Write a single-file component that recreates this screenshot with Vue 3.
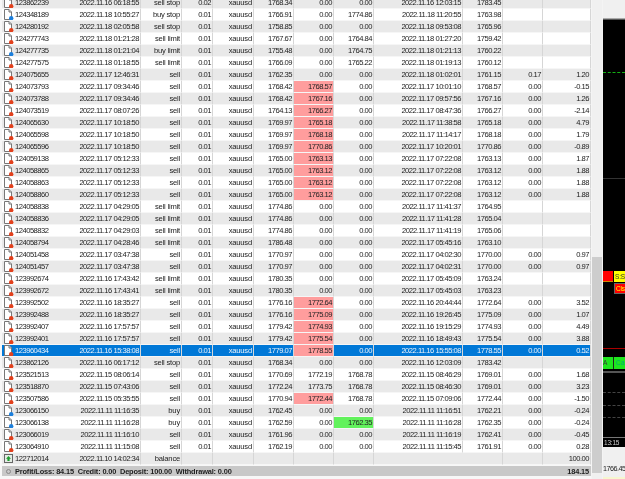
<template>
  <div class="terminal">
    <div class="history">
      <div class="rows">
        <div
          v-for="(row, i) in rows"
          :key="row.ticket"
          class="row"
          :class="{ odd: i % 2 === 0, selected: row.ticket === selectedTicket }"
        >
          <div class="cell ticket">
            <svg class="doc" width="11" height="12" viewBox="0 0 11 12">
              <template v-if="row.kind === 'balance'">
                <rect x="1.5" y="1.5" width="8" height="8" fill="#e4ece4" stroke="#666" />
                <path d="M5.5 3L8 5.8H6.6V8H4.4V5.8H3Z" fill="#1f9d2f" />
              </template>
              <template v-else>
                <path d="M1.5 .5H6L8.5 3V10.5H1.5Z" fill="#fff" stroke="#777" />
                <path d="M6 .5V3H8.5" fill="#ddd" stroke="#777" />
                <circle cx="8.2" cy="9.2" r="2.2" :fill="row.kind === 'buy' ? '#1c7fdc' : '#e2401c'" />
              </template>
            </svg>
            <span>{{ row.ticket }}</span>
          </div>
          <div class="cell">{{ row.open }}</div>
          <div class="cell word">{{ row.type }}</div>
          <div class="cell">{{ row.size }}</div>
          <div class="cell word">{{ row.kind === 'balance' ? '' : 'xauusd' }}</div>
          <div class="cell">{{ row.price }}</div>
          <div class="cell" :class="{ hit: row.slHit }">{{ row.sl }}</div>
          <div class="cell" :class="{ take: row.tpHit }">{{ row.tp }}</div>
          <div class="cell" :class="{ wide: row.kind === 'balance', word: row.kind === 'balance' }">{{ row.close }}</div>
          <div v-if="row.kind !== 'balance'" class="cell">{{ row.closePrice }}</div>
          <div class="cell">{{ row.swap }}</div>
          <div class="cell">{{ row.profit }}</div>
        </div>
      </div>
      <div class="summary">
        <span class="dot"></span>
        <span>Profit/Loss: 84.15&nbsp; Credit: 0.00&nbsp; Deposit: 100.00&nbsp; Withdrawal: 0.00</span>
        <span class="total">184.15</span>
      </div>
    </div>

    <div class="scrollbar">
      <div class="thumb"></div>
    </div>

    <div class="chart-side">
      <div class="chart-top"></div>
      <div class="chart">
        <div class="line-green"></div>
        <div class="line-grey"></div>
        <div class="btn-red"></div>
        <div class="btn-yellow">S:S</div>
        <div class="btn-close">Cls</div>
        <div class="line-red"></div>
        <div class="band"><span>A</span><span class="band-right">C a</span></div>
        <div class="line-bar"></div>
        <div class="dash d1"></div>
        <div class="dash d2"></div>
        <div class="dash d3"></div>
        <div class="time-label">13:15</div>
      </div>
      <div class="price-scale">1766.45</div>
      <div class="status-strip"></div>
    </div>
  </div>
</template>

<script setup>
const selectedTicket = '123960434'

const raw = [
  '123862239|2022.11.16 06:18:55|sell stop|0.02|1768.34|0.00|0.00|2022.11.16 12:03:15|1783.45||',
  '124348189|2022.11.18 10:55:27|buy stop|0.01|1766.91|0.00|1774.86|2022.11.18 11:20:55|1763.98||',
  '124280192|2022.11.18 02:05:58|sell stop|0.01|1758.85|0.00|0.00|2022.11.18 09:53:08|1765.96||',
  '124277743|2022.11.18 01:21:28|sell limit|0.01|1767.67|0.00|1764.84|2022.11.18 01:27:20|1759.42||',
  '124277735|2022.11.18 01:21:04|buy limit|0.01|1755.48|0.00|1764.75|2022.11.18 01:21:13|1760.22||',
  '124277575|2022.11.18 01:18:55|sell limit|0.01|1766.09|0.00|1765.22|2022.11.18 01:19:13|1760.12||',
  '124075655|2022.11.17 12:46:31|sell|0.01|1762.35|0.00|0.00|2022.11.18 01:02:01|1761.15|0.17|1.20',
  '124073793|2022.11.17 09:34:46|sell|0.01|1768.42|1768.57|0.00|2022.11.17 10:01:10|1768.57|0.00|-0.15',
  '124073788|2022.11.17 09:34:46|sell|0.01|1768.42|1767.16|0.00|2022.11.17 09:57:56|1767.16|0.00|1.26',
  '124073519|2022.11.17 08:07:26|sell|0.01|1764.13|1766.27|0.00|2022.11.17 08:47:36|1766.27|0.00|-2.14',
  '124065630|2022.11.17 10:18:50|sell|0.01|1769.97|1765.18|0.00|2022.11.17 11:38:58|1765.18|0.00|4.79',
  '124065598|2022.11.17 10:18:50|sell|0.01|1769.97|1768.18|0.00|2022.11.17 11:14:17|1768.18|0.00|1.79',
  '124065596|2022.11.17 10:18:50|sell|0.01|1769.97|1770.86|0.00|2022.11.17 10:20:01|1770.86|0.00|-0.89',
  '124059138|2022.11.17 05:12:33|sell|0.01|1765.00|1763.13|0.00|2022.11.17 07:22:08|1763.13|0.00|1.87',
  '124058865|2022.11.17 05:12:33|sell|0.01|1765.00|1763.12|0.00|2022.11.17 07:22:08|1763.12|0.00|1.88',
  '124058863|2022.11.17 05:12:33|sell|0.01|1765.00|1763.12|0.00|2022.11.17 07:22:08|1763.12|0.00|1.88',
  '124058860|2022.11.17 05:12:33|sell|0.01|1765.00|1763.12|0.00|2022.11.17 07:22:08|1763.12|0.00|1.88',
  '124058838|2022.11.17 04:29:05|sell limit|0.01|1774.86|0.00|0.00|2022.11.17 11:41:37|1764.95||',
  '124058836|2022.11.17 04:29:05|sell limit|0.01|1774.86|0.00|0.00|2022.11.17 11:41:28|1765.04||',
  '124058832|2022.11.17 04:29:03|sell limit|0.01|1774.86|0.00|0.00|2022.11.17 11:41:19|1765.06||',
  '124058794|2022.11.17 04:28:46|sell limit|0.01|1786.48|0.00|0.00|2022.11.17 05:45:16|1763.10||',
  '124051458|2022.11.17 03:47:38|sell|0.01|1770.97|0.00|0.00|2022.11.17 04:02:30|1770.00|0.00|0.97',
  '124051457|2022.11.17 03:47:38|sell|0.01|1770.97|0.00|0.00|2022.11.17 04:02:31|1770.00|0.00|0.97',
  '123992674|2022.11.16 17:43:42|sell limit|0.01|1780.35|0.00|0.00|2022.11.17 05:45:09|1763.24||',
  '123992672|2022.11.16 17:43:41|sell limit|0.01|1780.35|0.00|0.00|2022.11.17 05:45:03|1763.23||',
  '123992502|2022.11.16 18:35:27|sell|0.01|1776.16|1772.64|0.00|2022.11.16 20:44:44|1772.64|0.00|3.52',
  '123992488|2022.11.16 18:35:27|sell|0.01|1776.16|1775.09|0.00|2022.11.16 19:26:45|1775.09|0.00|1.07',
  '123992407|2022.11.16 17:57:57|sell|0.01|1779.42|1774.93|0.00|2022.11.16 19:15:29|1774.93|0.00|4.49',
  '123992401|2022.11.16 17:57:57|sell|0.01|1779.42|1775.54|0.00|2022.11.16 18:49:43|1775.54|0.00|3.88',
  '123960434|2022.11.16 15:38:08|sell|0.01|1779.07|1778.55|0.00|2022.11.16 15:55:08|1778.55|0.00|0.52',
  '123862126|2022.11.16 06:17:12|sell stop|0.01|1768.34|0.00|0.00|2022.11.16 12:03:09|1783.42||',
  '123521513|2022.11.15 08:06:14|sell|0.01|1770.69|1772.19|1768.78|2022.11.15 08:46:29|1769.01|0.00|1.68',
  '123518870|2022.11.15 07:43:06|sell|0.01|1772.24|1773.75|1768.78|2022.11.15 08:46:30|1769.01|0.00|3.23',
  '123507586|2022.11.15 05:35:55|sell|0.01|1770.94|1772.44|1768.78|2022.11.15 07:09:06|1772.44|0.00|-1.50',
  '123066150|2022.11.11 11:16:35|buy|0.01|1762.45|0.00|0.00|2022.11.11 11:16:51|1762.21|0.00|-0.24',
  '123066138|2022.11.11 11:16:28|buy|0.01|1762.59|0.00|1762.35|2022.11.11 11:16:28|1762.35|0.00|-0.24',
  '123066019|2022.11.11 11:16:10|sell|0.01|1761.96|0.00|0.00|2022.11.11 11:16:19|1762.41|0.00|-0.45',
  '123064910|2022.11.11 11:15:08|sell|0.01|1762.19|0.00|0.00|2022.11.11 11:15:45|1761.91|0.00|0.28',
  '122712014|2022.11.10 14:02:34|balance||||||Initial balance||100.00'
]

// stop loss is red when the trade closed on it, tp green likewise
const rows = raw.map((line) => {
  const [ticket, open, type, size, price, sl, tp, close, closePrice, swap, profit] = line.split('|')
  const kind = type === 'balance' ? 'balance' : type.startsWith('buy') ? 'buy' : 'sell'
  return {
    ticket, open, type, size, price, sl, tp, close, closePrice, swap, profit, kind,
    slHit: sl !== '' && sl === closePrice,
    tpHit: tp !== '' && tp === closePrice
  }
})
</script>

<style scoped>
.terminal {
  display: flex;
  width: 625px;
  height: 479px;
  overflow: hidden;
  background: #f4f4f4;
  font-family: "Liberation Sans", Arial, sans-serif;
  font-size: 7.6px;
  letter-spacing: -0.5px;
  color: #222;
  filter: blur(0.35px);
}

.history {
  width: 591px;
  flex-shrink: 0;
  padding-left: 2px;
  box-sizing: border-box;
  display: flex;
  flex-direction: column;
  background: #f7f7f7;
}

.rows {
  margin-top: -3px;
}

.row {
  display: grid;
  grid-template-columns: 52px 87px 41px 31px 41px 40px 40px 40px 89px 40px 40px 48px;
  height: 12px;
  background: #fff;
}

.row.odd {
  background: #e9e9e9;
}

.row.selected {
  background: #0078d7;
  color: #e8f2fb;
}

.cell {
  height: 12px;
  line-height: 12px;
  text-align: right;
  padding-right: 1px;
  box-sizing: border-box;
  border-right: 1px solid #d6d6d6;
  border-bottom: 1px solid #f6f6f6;
  white-space: nowrap;
  overflow: hidden;
}

.word {
  letter-spacing: -0.2px;
}

.ticket {
  display: flex;
  align-items: center;
  gap: 1px;
  text-align: left;
  border-right: none;
  padding-left: 1px;
}

.doc {
  flex-shrink: 0;
}

.wide {
  grid-column: span 2;
}

.hit {
  background: #ff9d9d;
  color: #222;
}

.take {
  background: #62f25c;
  color: #222;
}

.summary {
  display: flex;
  align-items: center;
  height: 10px;
  margin-top: 1px;
  background: #c8c8c8;
  font-weight: bold;
  font-size: 7.4px;
  letter-spacing: -0.15px;
  padding-right: 2px;
}

.dot {
  width: 3px;
  height: 3px;
  margin: 0 4px;
  border: 1px solid #888;
  border-radius: 50%;
}

.total {
  margin-left: auto;
}

.scrollbar {
  width: 10px;
  margin-left: 1px;
  flex-shrink: 0;
  display: flex;
  flex-direction: column;
  justify-content: flex-end;
  padding-bottom: 6px;
  background: #f0f0f0;
}

.thumb {
  height: 216px;
  background: #cdcdcd;
}

.chart-side {
  flex: 1;
  min-width: 0;
  margin-left: 1px;
  display: flex;
  flex-direction: column;
  background: #f0f0f0;
}

.chart-top {
  height: 18px;
  border-bottom: 1px solid #aaa;
}

.chart {
  position: relative;
  height: 427px;
  background: #000;
  border-top: 1px solid #555;
  overflow: hidden;
  font-size: 6.5px;
  letter-spacing: -0.2px;
}

.line-green {
  position: absolute;
  top: 52px;
  left: 0;
  right: 0;
  border-top: 1px dashed #13b013;
}

.line-grey {
  position: absolute;
  top: 158px;
  left: 0;
  right: 0;
  border-top: 1px solid #333;
}

.btn-red {
  position: absolute;
  top: 251px;
  left: 0;
  width: 10px;
  height: 10px;
  background: #f00;
  border-bottom: 1px solid #c80;
}

.btn-yellow {
  position: absolute;
  top: 251px;
  left: 11px;
  width: 10px;
  height: 11px;
  line-height: 11px;
  padding-left: 1px;
  background: #ff0;
  color: #333;
}

.btn-close {
  position: absolute;
  top: 263px;
  left: 11px;
  width: 10px;
  height: 9px;
  line-height: 9px;
  padding-left: 1px;
  background: #f00;
  color: #ff0;
  border: 1px solid #666;
  border-right: none;
}

.line-red {
  position: absolute;
  top: 328px;
  left: 0;
  right: 0;
  border-top: 1px solid #a00;
}

.band {
  position: absolute;
  top: 337px;
  left: 0;
  right: 0;
  height: 12px;
  line-height: 12px;
  background: #1ee61e;
  color: #333;
}

.band-right {
  position: absolute;
  left: 10px;
  padding-left: 2px;
  border-left: 1px solid #222;
  color: #0a7;
  white-space: nowrap;
  word-spacing: -1px;
}

.line-bar {
  position: absolute;
  top: 351px;
  left: 0;
  right: 0;
  height: 2px;
  background: #555;
}

.dash {
  position: absolute;
  left: 0;
  right: 0;
  border-top: 1px dashed #444;
}

.d1 {
  top: 372px;
}

.d2 {
  top: 385px;
}

.d3 {
  top: 397px;
}

.time-label {
  position: absolute;
  top: 417px;
  left: 0;
  right: 0;
  height: 9px;
  line-height: 9px;
  padding-left: 1px;
  border-top: 1px solid #777;
  color: #ccc;
}

.price-scale {
  margin-top: 17px;
  font-size: 7.2px;
  line-height: 10px;
  letter-spacing: -0.5px;
  white-space: nowrap;
}

.status-strip {
  margin-top: auto;
  height: 2px;
  background: #f6f6d0;
}
</style>
